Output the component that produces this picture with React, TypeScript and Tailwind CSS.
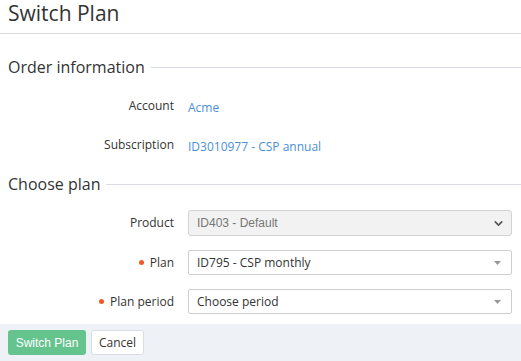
import { ChevronDown } from "lucide-react"

const Section = ({ title }: { title: string }) => (
    <div className="flex items-center gap-[6px] pl-2 h-[24px]">
        <span className="text-[16px] leading-[24px] text-[#333] whitespace-nowrap">{title}</span>
        <div className="flex-1 h-px bg-[#d9dde3]" />
    </div>
)

const Row = ({ label, required, children }: { label: string; required?: boolean; children: React.ReactNode }) => (
    <div className="flex items-center">
        <div className="w-[175px] pr-[1px] flex items-center justify-end gap-[6px] text-[12px] text-[#333]">
            {required && <span className="w-[5px] h-[5px] rounded-full bg-[#f05a28]" />}
            {label}
        </div>
        <div className="flex-1 pl-[13px] pr-[9px]">{children}</div>
    </div>
)

const Caret = () => (
    <svg width="7" height="4" viewBox="0 0 7 4" className="mr-[4px]">
        <path d="M0 0 L7 0 L3.5 4 Z" fill="#999" />
    </svg>
)

export default function App() {
    return (
        <div className="w-[521px] h-[361px] bg-white flex flex-col font-['Open_Sans',sans-serif] overflow-hidden">
            <div className="h-[34px] shrink-0 border-b border-[#d9dde3] px-2 flex items-start">
                <h1 className="text-[21px] leading-[26px] text-[#333]">Switch Plan</h1>
            </div>
            <div className="flex-1 flex flex-col">
                <div className="mt-[21px]">
                    <Section title="Order information" />
                </div>
                <div className="mt-[15px] h-[24px] flex items-center">
                    <div className="w-full">
                        <Row label="Account">
                            <span className="text-[12px] text-[#4a8fd8]">Acme</span>
                        </Row>
                    </div>
                </div>
                <div className="mt-[15px] h-[24px] flex items-center">
                    <div className="w-full">
                        <Row label="Subscription">
                            <span className="text-[12px] text-[#4a8fd8]">ID3010977 - CSP annual</span>
                        </Row>
                    </div>
                </div>
                <div className="mt-[15px]">
                    <Section title="Choose plan" />
                </div>
                <div className="mt-[14px]">
                    <Row label="Product">
                        <div className="h-[26px] rounded-[3px] border border-[#d3d3d3] bg-[#f2f2f2] flex items-center justify-between pl-[8px] pr-[6px]">
                            <span className="text-[12px] text-[#777] font-['Liberation_Sans',sans-serif]">ID403 - Default</span>
                            <ChevronDown size={13} strokeWidth={3} className="text-[#555]" />
                        </div>
                    </Row>
                </div>
                <div className="mt-[14px]">
                    <Row label="Plan" required>
                        <div className="h-[25px] rounded-[2px] border border-[#cfcfcf] bg-white flex items-center justify-between pl-[8px] pr-[6px]">
                            <span className="text-[12px] text-[#333]">ID795 - CSP monthly</span>
                            <Caret />
                        </div>
                    </Row>
                </div>
                <div className="mt-[14px]">
                    <Row label="Plan period" required>
                        <div className="h-[25px] rounded-[2px] border border-[#cfcfcf] bg-white flex items-center justify-between pl-[8px] pr-[6px]">
                            <span className="text-[12px] text-[#333]">Choose period</span>
                            <Caret />
                        </div>
                    </Row>
                </div>
            </div>
            <div className="h-[37px] shrink-0 bg-[#eef1f5] flex items-start gap-[5px] px-2 pt-[6px]">
                <button className="h-[25px] w-[78px] rounded-[3px] bg-[#65c38e] text-white text-[12px] font-['Liberation_Sans',sans-serif]">
                    Switch Plan
                </button>
                <button className="h-[25px] w-[53px] rounded-[3px] bg-white border border-[#d9dde3] text-[#333] text-[12px]">
                    Cancel
                </button>
            </div>
        </div>
    )
}
